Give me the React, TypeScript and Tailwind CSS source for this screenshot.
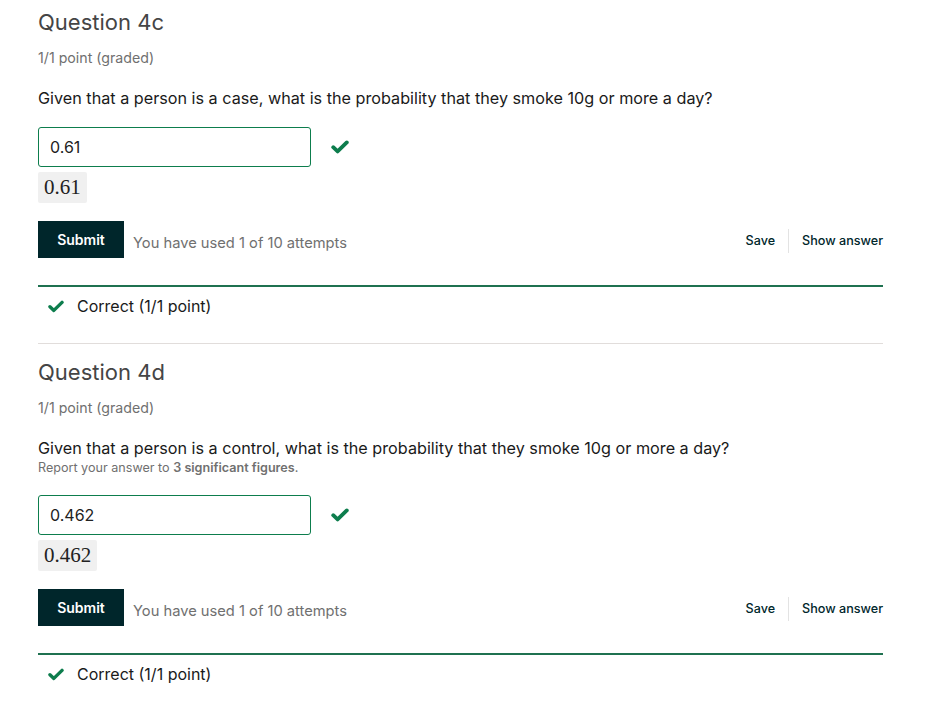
import React from "react";

type Problem = {
  title: string;
  question: string;
  hint?: React.ReactNode;
  answer: string;
};

const problems: Problem[] = [
  {
    title: "Question 4c",
    question: "Given that a person is a case, what is the probability that they smoke 10g or more a day?",
    answer: "0.61",
  },
  {
    title: "Question 4d",
    question: "Given that a person is a control, what is the probability that they smoke 10g or more a day?",
    hint: (
      <>
        Report your answer to <b className="font-semibold">3 significant figures</b>.
      </>
    ),
    answer: "0.462",
  },
];

function Check({ className = "" }: { className?: string }) {
  return (
    <svg viewBox="0 0 18 14" className={className} fill="none">
      <path d="M2.2 7.2 L6.6 11.4 L15.8 2.4" stroke="#0d7d4d" strokeWidth="3.8" strokeLinecap="round" strokeLinejoin="round" />
    </svg>
  );
}

function ProblemBlock({ p, last }: { p: Problem; last: boolean }) {
  return (
    <section>
      <h3 className="text-[22px] leading-[32px] text-[#454545] font-normal">{p.title}</h3>
      <div className="mt-[10px] text-[14.2px] leading-[20px] text-[#707070]">1/1 point (graded)</div>
      <p className="mt-[18px] text-[16.2px] leading-[24px] text-[#1a1a1a]">{p.question}</p>
      {p.hint && <p className="text-[12.6px] leading-[16px] text-[#707070]">{p.hint}</p>}

      <div className={`${p.hint ? "mt-[19px]" : "mt-[17px]"} flex items-center`}>
        <div className="w-[273px] h-[40px] border border-[#0d7d4d] rounded-[3px] px-[11px] flex items-center text-[16px] text-[#222]">
          {p.answer}
        </div>
        <Check className="ml-[20px] w-[18px] h-[14px]" />
      </div>
      <div className="mt-[5px] inline-block h-[31px] px-[6px] bg-[#f0f0f0] rounded-[2px] text-[21px] leading-[31px] text-[#222] font-['Liberation_Serif',serif]">
        {p.answer}
      </div>

      <div className="mt-[18px] flex items-center">
        <button className="h-[37px] w-[86px] bg-[#00262b] text-white text-[14px] font-semibold">Submit</button>
        <span className="ml-[9px] mt-[8px] text-[14.7px] text-[#707070]">You have used 1 of 10 attempts</span>
        <div className="ml-auto mt-[2px] flex items-center text-[12.6px] font-medium text-[#00262b]">
          <span className="mt-[2px]">Save</span>
          <span className="mx-[13px] h-[24px] w-px bg-[#e3e3e3]" />
          <span className="mt-[2px]">Show answer</span>
        </div>
      </div>

      <div className="mt-[27px] h-[2px] bg-[#1f7150]" />
      <div className="mt-[7px] flex items-center h-[24px]">
        <Check className="ml-[10px] w-[16px] h-[13px]" />
        <span className="ml-[13px] text-[16px] text-[#1a1a1a]">Correct (1/1 point)</span>
      </div>
      {!last && <div className="mt-[25px] h-px bg-[#e1dddb]" />}
    </section>
  );
}

export default function App() {
  return (
    <div className="min-h-screen bg-white font-['Inter',sans-serif]">
      <div className="w-[845px] ml-[38px] pt-[6px] flex flex-col gap-[12px]">
        {problems.map((p, i) => (
          <ProblemBlock key={p.title} p={p} last={i === problems.length - 1} />
        ))}
      </div>
    </div>
  );
}
